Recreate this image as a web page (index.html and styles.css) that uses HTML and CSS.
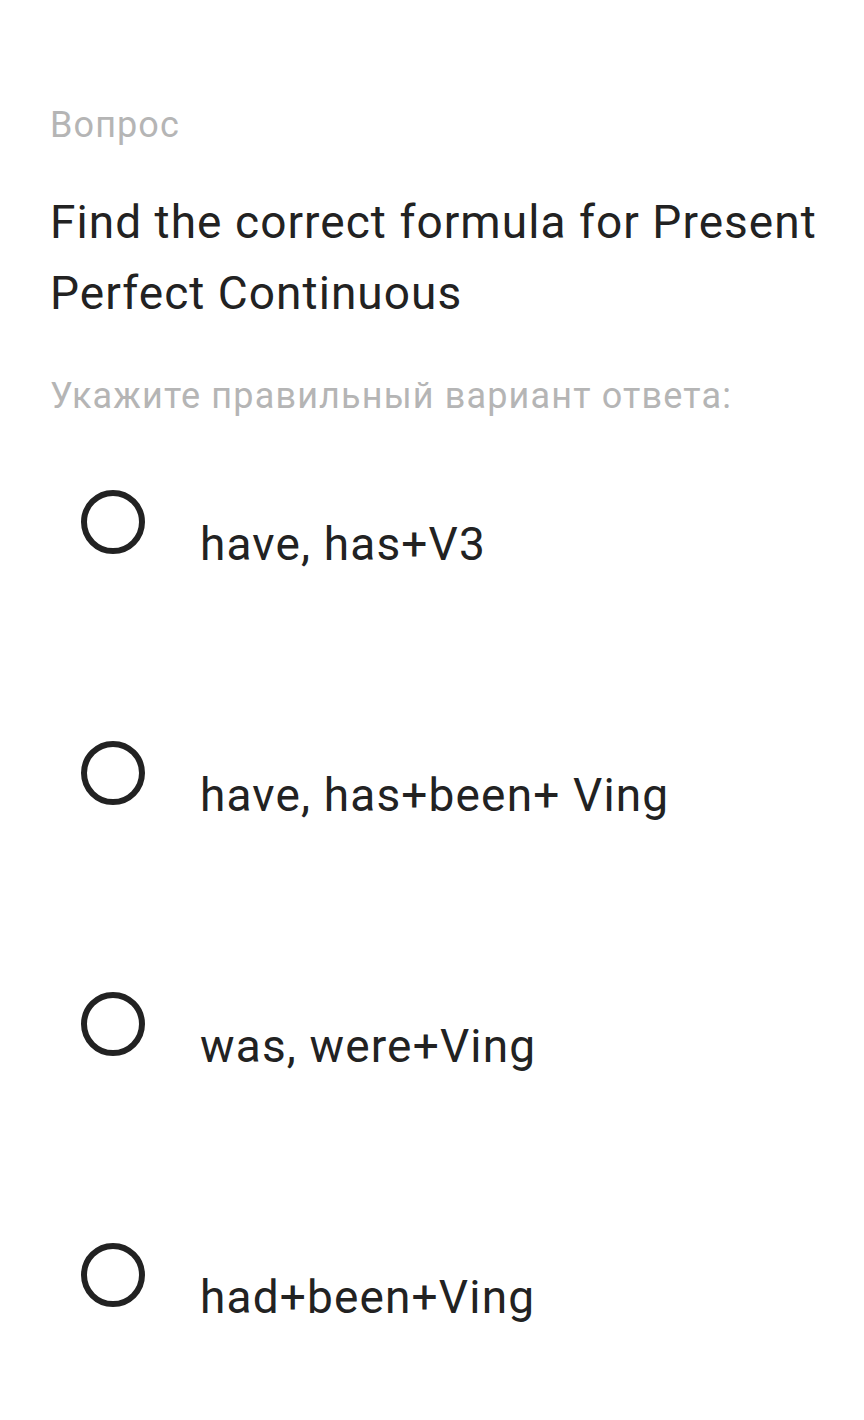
FILE: index.html
```html
<!DOCTYPE html>
<html lang="ru">
<head>
<meta charset="utf-8">
<link rel="stylesheet" href="styles.css">
</head>
<body>
<main class="page">
  <div class="label">Вопрос</div>
  <h1 class="question">Find the correct formula for Present Perfect Continuous</h1>
  <div class="hint">Укажите правильный вариант ответа:</div>
  <ul class="options">
    <li class="option"><span class="radio"></span><span class="text">have, has+V3</span></li>
    <li class="option"><span class="radio"></span><span class="text">have, has+been+ Ving</span></li>
    <li class="option"><span class="radio"></span><span class="text">was, were+Ving</span></li>
    <li class="option"><span class="radio"></span><span class="text">had+been+Ving</span></li>
  </ul>
</main>
</body>
</html>
```

FILE: styles.css
```css
* { box-sizing: border-box; }
html, body { margin: 0; padding: 0; background: #fff; }
body { font-family: Roboto, "Noto Sans", sans-serif; color: #222; }
.page { padding: 100px 20px 0 50px; width: 864px; }
.label { font-size: 36px; letter-spacing: 1.1px; line-height: 50px; color: #b5b5b5; }
.question { margin: 37px 0 0; font-size: 46px; letter-spacing: 1.05px; font-weight: 400; line-height: 71px; color: #222; }
.hint { margin-top: 42px; font-size: 36px; letter-spacing: 1.15px; line-height: 50px; color: #b5b5b5; }
.options { list-style: none; margin: 69px 0 0; padding: 0; display: flex; flex-direction: column; gap: 170px; }
.option { display: flex; align-items: flex-start; }
.radio { flex: none; width: 64px; height: 64px; margin: 0 0 0 31px; border: 6.5px solid #222; border-radius: 50%; }
.text { margin: 27px 0 0 55px; font-size: 46px; letter-spacing: 1.15px; line-height: 54px; }
```
